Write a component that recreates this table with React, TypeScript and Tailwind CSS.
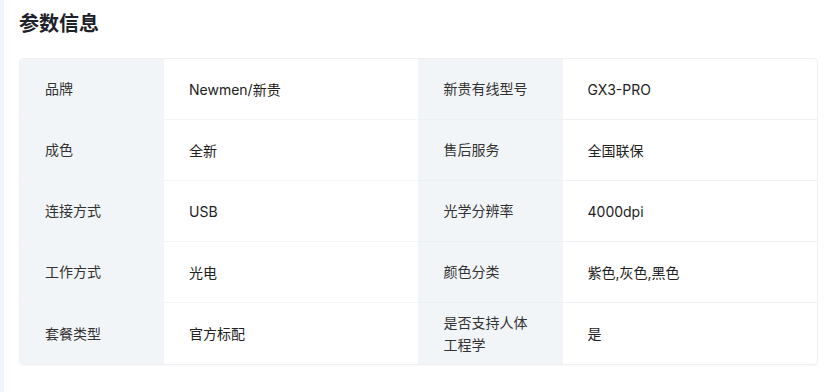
import React from 'react';

const params: [string, string][] = [
  ['品牌', 'Newmen/新贵'],
  ['新贵有线型号', 'GX3-PRO'],
  ['成色', '全新'],
  ['售后服务', '全国联保'],
  ['连接方式', 'USB'],
  ['光学分辨率', '4000dpi'],
  ['工作方式', '光电'],
  ['颜色分类', '紫色,灰色,黑色'],
  ['套餐类型', '官方标配'],
  ['是否支持人体工程学', '是'],
];

export default function App() {
  return (
    <div
      className="flex w-[824px] h-[392px] bg-white text-[#222]"
      style={{ fontFamily: 'Inter, "Noto Sans CJK SC", sans-serif' }}
    >
      {/* left edge strip */}
      <div className="w-[4px] shrink-0 bg-[#f1f4f8]" />

      <div className="flex-1 pl-[15px] pr-[6px]">
        <h2 className="h-[50px] pt-[10px] text-[20px] font-bold leading-[28px] text-[#1d2129]">参数信息</h2>

        <div className="mt-[8px] grid grid-cols-2 overflow-hidden rounded-[4px] border border-[#eef0f3] shadow-[0_1px_2px_rgba(0,0,0,0.03)]">
          {params.map(([label, value], i) => (
            <div
              key={label}
              className={`flex h-[61px] ${i < params.length - 2 ? 'border-b border-[#eef0f3]' : ''} ${i % 2 === 0 ? 'border-r border-[#f3f4f6]' : ''}`}
            >
              <div className="flex w-[144px] shrink-0 items-center bg-[#f2f5f8] px-[25px] text-[14px] leading-[22px] text-[#333]">
                {label}
              </div>
              <div className="flex flex-1 items-center px-[25px] text-[14px] text-[#222]">{value}</div>
            </div>
          ))}
        </div>
      </div>
    </div>
  );
}
